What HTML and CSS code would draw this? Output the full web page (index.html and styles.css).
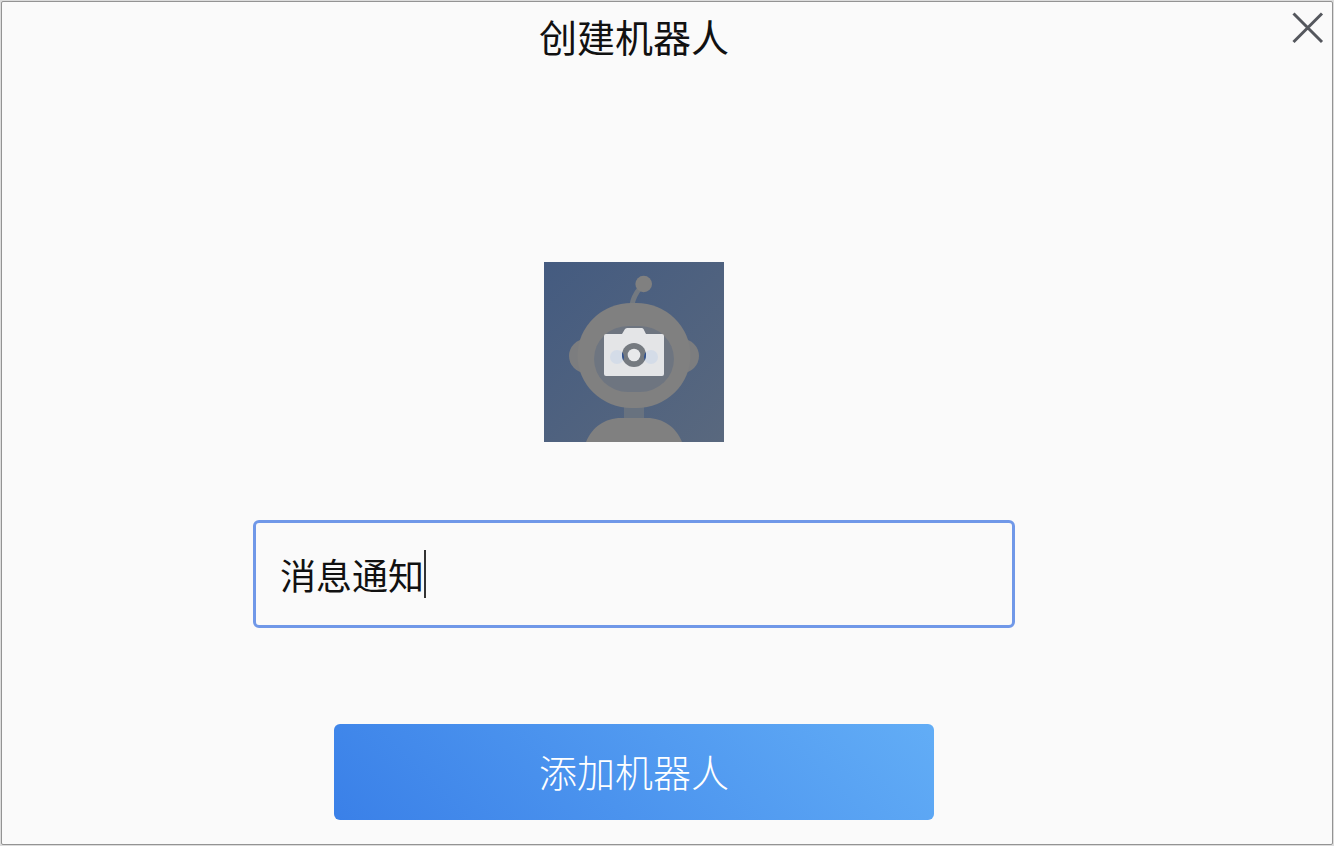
FILE: index.html
```html
<!DOCTYPE html>
<html lang="zh-CN">
<head>
  <meta charset="UTF-8" />
  <meta name="viewport" content="width=device-width, initial-scale=1.0"/>
  <title>创建机器人</title>
  <link rel="stylesheet" href="styles.css">
</head>
<body>
  <main class="dialog">
    <header class="dialog-header">
      <h1>创建机器人</h1>
      <button type="button" class="close" aria-label="关闭">
        <svg width="32" height="32" viewBox="0 0 32 32" fill="none" stroke="#54575d" stroke-width="3">
          <path d="M1.5 1.5 30 30M30 1.5 1.5 30" />
        </svg>
      </button>
    </header>

    <form class="robot-form">
      <button type="button" class="avatar" aria-label="更换头像">
        <svg viewBox="0 0 180 180">
          <defs>
            <linearGradient id="sky" x1="0" y1="0" x2="1" y2="1">
              <stop offset="0" stop-color="#445b80" />
              <stop offset="1" stop-color="#59687e" />
            </linearGradient>
            <!-- keeps the dark part of the eyes inside the lens -->
            <clipPath id="lens"><circle cx="90" cy="93" r="12" /></clipPath>
          </defs>
          <rect width="180" height="180" fill="url(#sky)" />

          <!-- robot -->
          <path d="M88 43C89 36 92 31 96 26" fill="none" stroke="#737980" stroke-width="5" />
          <circle cx="99.7" cy="22" r="8.3" fill="#808080" />
          <rect x="80" y="144" width="20" height="14" fill="#68727f" />
          <circle cx="42" cy="94" r="17" fill="#7c7d7f" />
          <circle cx="138" cy="94" r="17" fill="#7c7d7f" />
          <rect x="33.5" y="41" width="113" height="105" rx="54" ry="52.5" fill="#808080" />
          <rect x="50" y="64" width="80" height="66" rx="34" ry="33" fill="#6e7580" />
          <path d="M42 180C48 165 61 156 77 156H103C119 156 132 165 138 180Z" fill="#808080" />

          <!-- camera -->
          <path d="M62 72H78L81 67Q82 66 83.5 66H97.5Q99 66 99.5 67L102 72H118Q120 72 120 74V112Q120 114 118 114H62Q60 114 60 112V74Q60 72 62 72Z" fill="#e4e5e7" />
          <circle cx="73" cy="95" r="7" fill="#d4dce8" />
          <circle cx="107" cy="95" r="7" fill="#d4dce8" />
          <circle cx="90" cy="93" r="12" fill="#757a80" />
          <g clip-path="url(#lens)" fill="#2f5190">
            <circle cx="73" cy="95" r="7" />
            <circle cx="107" cy="95" r="7" />
          </g>
          <circle cx="90" cy="93" r="6.3" fill="#e8e9eb" />
        </svg>
      </button>

      <label class="name-field">
        <input type="text" class="name-input" value="消息通知" aria-label="机器人名字" />
        <span class="caret"></span>
      </label>

      <button type="button" class="submit">添加机器人</button>
    </form>
  </main>
</body>
</html>
```

FILE: styles.css
```css
* {
  box-sizing: border-box;
}

body {
  margin: 0;
  padding: 1px;
  min-height: 100vh;
  display: flex;
  background: #dcdcdc;
  font-family: "Noto Sans CJK SC", sans-serif;
  color: #111;
}

button,
input {
  font-family: inherit;
}

.dialog {
  flex: 1;
  border: 1px solid #939393;
  border-radius: 2px;
  background: #fafafa;
}

.dialog-header {
  display: flex;
  align-items: flex-start;
}

.dialog-header h1 {
  flex: 1;
  margin: 0;
  font-size: 38px;
  font-weight: 400;
  line-height: 68px;
  text-align: center;
}

.close {
  width: 66px;
  padding: 10px 8px 0 0;
  border: none;
  background: none;
  cursor: pointer;
}

.close svg {
  display: block;
  margin-left: auto;
}

.robot-form {
  display: flex;
  flex-direction: column;
  align-items: center;
  padding: 192px 66px 24px 0;
}

.avatar {
  width: 180px;
  height: 180px;
  padding: 0;
  border: none;
  background: none;
  cursor: pointer;
}

.avatar svg {
  display: block;
}

.name-field {
  display: flex;
  align-items: center;
  width: 100%;
  max-width: 762px;
  height: 108px;
  margin-top: 78px;
  padding: 0 24px;
  border: 3px solid #7098e8;
  border-radius: 6px;
  cursor: text;
}

.name-input {
  field-sizing: content;
  min-width: 0;
  max-width: 100%;
  padding: 0;
  border: none;
  outline: none;
  background: none;
  color: #111;
  font-size: 36px;
  font-weight: 400;
  caret-color: transparent;
}

.caret {
  width: 2px;
  height: 48px;
  background: #333;
}

.submit {
  width: 100%;
  max-width: 600px;
  height: 96px;
  margin-top: 96px;
  padding: 0 0 4px;
  border: none;
  border-radius: 6px;
  background: linear-gradient(45deg, #3a80e8, #62adf6);
  color: #fff;
  font-size: 38px;
  font-weight: 300;
  cursor: pointer;
}
```
